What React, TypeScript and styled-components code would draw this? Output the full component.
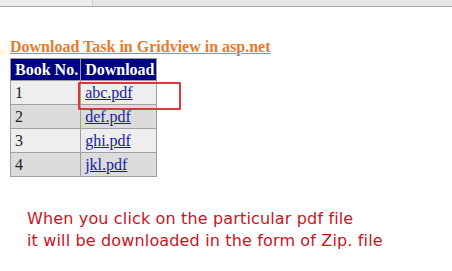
import styled, { createGlobalStyle } from 'styled-components'

const GlobalStyle = createGlobalStyle`
  html, body {
    margin: 0;
    padding: 0;
    background: #ffffff;
  }
`

const Page = styled.div`
  position: relative;
  width: 452px;
  height: 271px;
  overflow: hidden;
  background: #fff;
`

const Chrome = styled.div`
  display: flex;
  height: 6px;
  background: #e6e6e6;
  border-bottom: 1px solid #a8a8a8;
`

const Tab = styled.div`
  width: 92px;
  background: #ececec;
  border-right: 1px solid #d0d0d0;
`

const Content = styled.div`
  padding: 31px 0 0 10px;
`

const Heading = styled.a`
  display: inline-block;
  font-family: 'Liberation Serif', 'Times New Roman', serif;
  font-weight: bold;
  font-size: 16px;
  color: #e87a2c;
  text-decoration: underline;
  line-height: 18px;
  margin-bottom: 2px;
`

const Grid = styled.table`
  border-collapse: collapse;
  font-family: 'Liberation Serif', 'Times New Roman', serif;
  font-size: 16px;
`

const HeadCell = styled.th`
  background: #000084;
  color: #fff;
  font-weight: bold;
  text-align: left;
  white-space: nowrap;
  padding: 0 2px 0 4px;
  height: 21px;
  border: 1px solid #999;
`

const Row = styled.tr<{ $alt?: boolean }>`
  background: ${p => (p.$alt ? '#dcdcdc' : '#eeeeee')};
`

const Cell = styled.td`
  color: #222;
  padding: 0 2px 0 4px;
  height: 23px;
  white-space: nowrap;
  border: 1px solid #a0a0a0;
`

const FileLink = styled.a`
  color: #1a1aa6;
  text-decoration: underline;
`

const Highlight = styled.div`
  position: absolute;
  left: 78px;
  top: 82px;
  width: 99px;
  height: 24px;
  border: 2px solid #d8393b;
  border-radius: 1px;
`

const Note = styled.div`
  padding: 31px 0 0 27px;
  font-family: 'DejaVu Sans', Verdana, sans-serif;
  font-size: 16px;
  letter-spacing: 0.15px;
  line-height: 22px;
  color: #c8141e;
`

const files = ['abc.pdf', 'def.pdf', 'ghi.pdf', 'jkl.pdf']

export default function App() {
  return (
    <>
      <GlobalStyle />
      <Page>
        <Chrome>
          <Tab />
        </Chrome>
        <Content>
          <Heading>Download Task in Gridview in asp.net</Heading>
          <Grid>
            <thead>
              <tr>
                <HeadCell>Book No.</HeadCell>
                <HeadCell>Download</HeadCell>
              </tr>
            </thead>
            <tbody>
              {files.map((f, i) => (
                <Row key={f} $alt={i % 2 === 1}>
                  <Cell>{i + 1}</Cell>
                  <Cell>
                    <FileLink>{f}</FileLink>
                  </Cell>
                </Row>
              ))}
            </tbody>
          </Grid>
        </Content>
        <Note>
          When you click on the particular pdf file
          <br />
          it will be downloaded in the form of Zip. file
        </Note>
        <Highlight />
      </Page>
    </>
  )
}
